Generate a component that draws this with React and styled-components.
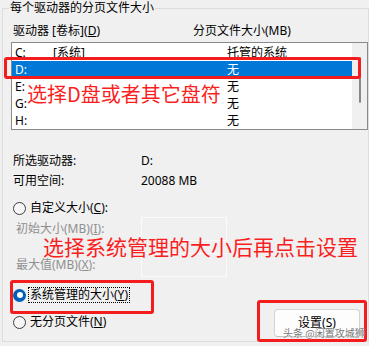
import React from "react";
import styled, { createGlobalStyle } from "styled-components";

const GlobalStyle = createGlobalStyle`
  html, body { margin: 0; padding: 0; background: #f0f0f0; }
  body {
    font-family: "Noto Sans", "Noto Sans CJK SC", sans-serif;
    font-size: 12px;
    color: #000;
  }
  * { box-sizing: border-box; }
`;

const Frame = styled.div`
  position: relative;
  width: 369px;
  height: 346px;
  overflow: hidden;
  padding: 8px 0 0 2px;
  background: #f0f0f0;
`;

const Group = styled.div`
  width: 367px;
  height: 334px;
  border: 1px solid #dcdcdc;
  display: flex;
  flex-direction: column;
`;

const Legend = styled.div`
  align-self: flex-start;
  margin: -9px 0 0 6px;
  padding: 0 1px;
  background: #f0f0f0;
  line-height: 16px;
`;

const HeaderRow = styled.div`
  display: grid;
  grid-template-columns: 180px 1fr;
  margin-top: 7px;
  padding-left: 10px;
  line-height: 16px;
`;

const ListBox = styled.div`
  margin: 3px 0 0 8px;
  width: 357px;
  height: 88px;
  border: 1px solid #8a8a8a;
  background: #fff;
  display: flex;
`;

const Rows = styled.div`
  flex: 1;
  padding-top: 1px;
`;

const Row = styled.div`
  display: grid;
  grid-template-columns: 38px 174px 1fr;
  height: 17px;
  line-height: 17px;
  padding-left: 3px;
  background: ${(p) => (p.$selected ? "#0078d7" : "transparent")};
  color: ${(p) => (p.$selected ? "#fff" : "#000")};
`;

const Scrollbar = styled.div`
  width: 15px;
  background: #f0f0f0;
  display: flex;
  justify-content: center;
  padding-top: 14px;
`;

const Thumb = styled.div`
  width: 2px;
  height: 46px;
  border-radius: 1px;
  background: #8a8a8a;
`;

const InfoGrid = styled.div`
  margin-top: 23px;
  display: grid;
  grid-template-columns: 128px 1fr;
  row-gap: 4px;
  padding-left: 10px;
  line-height: 16px;
`;

const RadioRow = styled.div`
  display: flex;
  align-items: center;
  height: 16px;
  padding-left: 10px;
  margin-top: ${(p) => p.$mt || 0}px;
`;

const Radio = styled.span`
  position: relative;
  width: 13px;
  height: 13px;
  border-radius: 50%;
  flex: none;
  border: ${(p) => (p.$checked ? "none" : "1px solid #3c3c3c")};
  background: ${(p) => (p.$checked ? "#005fb8" : "#f6f6f6")};
  &::after {
    content: "";
    display: ${(p) => (p.$checked ? "block" : "none")};
    position: absolute;
    left: 3.5px;
    top: 3.5px;
    width: 6px;
    height: 6px;
    border-radius: 50%;
    background: #fff;
  }
`;

const RadioText = styled.span`
  margin-left: 2px;
  padding: 0 1px;
  line-height: 14px;
  border: 1px dotted ${(p) => (p.$focused ? "#000" : "transparent")};
`;

const FieldRow = styled.div`
  display: flex;
  align-items: center;
  height: 24px;
  padding-left: 13px;
  color: #8f8f8f;
  margin-top: ${(p) => p.$mt || 0}px;
`;

const FieldLabel = styled.span`
  width: 125px;
  line-height: 16px;
`;

const TextBox = styled.div`
  width: 86px;
  height: 24px;
  border: 1px solid #fbfbfb;
`;

const Bottom = styled.div`
  display: flex;
  align-items: flex-start;
  margin-top: 10px;
`;

const RadioCol = styled.div`
  display: flex;
  flex-direction: column;
  gap: 11px;
`;

const Button = styled.div`
  margin: 22px 8px 0 auto;
  width: 86px;
  height: 28px;
  border: 1px solid #d3d3d3;
  border-bottom-color: #c2c2c2;
  border-radius: 4px;
  background: #fdfdfd;
  display: flex;
  align-items: center;
  justify-content: center;
  line-height: 16px;
`;

const RedBox = styled.div`
  position: absolute;
  left: ${(p) => p.$x}px;
  top: ${(p) => p.$y}px;
  width: ${(p) => p.$w}px;
  height: ${(p) => p.$h}px;
  border: 3px solid #f41d1d;
  border-radius: 3px;
`;

const RedText = styled.div`
  position: absolute;
  left: ${(p) => p.$x}px;
  top: ${(p) => p.$y}px;
  font-family: "Noto Sans CJK SC", sans-serif;
  font-size: ${(p) => p.$size}px;
  line-height: 1;
  color: #fa1f1f;
  white-space: nowrap;
`;

const Watermark = styled.div`
  position: absolute;
  left: 283px;
  top: 327px;
  font-family: "Noto Sans CJK SC", sans-serif;
  font-size: 10px;
  line-height: 12px;
  color: rgba(80, 80, 80, 0.8);
  text-shadow: 0 0 1px #fff, 0 0 1px #fff;
  white-space: nowrap;
`;

const drives = [
  { d: "C:", label: "[系统]", size: "托管的系统" },
  { d: "D:", label: "", size: "无", selected: true },
  { d: "E:", label: "", size: "无" },
  { d: "G:", label: "", size: "无" },
  { d: "H:", label: "", size: "无" },
];

export default function App() {
  return (
    <>
      <GlobalStyle />
      <Frame>
        <Group>
          <Legend>每个驱动器的分页文件大小</Legend>
          <HeaderRow>
            <span>
              驱动器 [卷标](<u>D</u>)
            </span>
            <span>分页文件大小(MB)</span>
          </HeaderRow>
          <ListBox>
            <Rows>
              {drives.map((r) => (
                <Row key={r.d} $selected={r.selected}>
                  <span>{r.d}</span>
                  <span>{r.label}</span>
                  <span>{r.size}</span>
                </Row>
              ))}
            </Rows>
            <Scrollbar>
              <Thumb />
            </Scrollbar>
          </ListBox>
          <InfoGrid>
            <span>所选驱动器:</span>
            <span>D:</span>
            <span>可用空间:</span>
            <span>20088 MB</span>
          </InfoGrid>
          <RadioRow $mt={11}>
            <Radio />
            <RadioText>
              自定义大小(<u>C</u>):
            </RadioText>
          </RadioRow>
          <FieldRow $mt={1}>
            <FieldLabel>
              初始大小(MB)(<u>I</u>):
            </FieldLabel>
            <TextBox />
          </FieldRow>
          <FieldRow $mt={12}>
            <FieldLabel>
              最大值(MB)(<u>X</u>):
            </FieldLabel>
            <TextBox />
          </FieldRow>
          <Bottom>
            <RadioCol>
              <RadioRow>
                <Radio $checked />
                <RadioText $focused>
                  系统管理的大小(<u>Y</u>)
                </RadioText>
              </RadioRow>
              <RadioRow>
                <Radio />
                <RadioText>
                  无分页文件(<u>N</u>)
                </RadioText>
              </RadioRow>
            </RadioCol>
            <Button>
              设置(<u>S</u>)
            </Button>
          </Bottom>
        </Group>

        <RedBox $x={4} $y={57} $w={357} $h={22} />
        <RedBox $x={10} $y={280} $w={144} $h={34} />
        <RedBox $x={257} $y={300} $w={110} $h={42} />
        <RedText $x={27} $y={84} $size={20}>
          选择D盘或者其它盘符
        </RedText>
        <RedText $x={43} $y={236} $size={21}>
          选择系统管理的大小后再点击设置
        </RedText>
        <Watermark>头条 @闲置攻城狮</Watermark>
      </Frame>
    </>
  );
}
